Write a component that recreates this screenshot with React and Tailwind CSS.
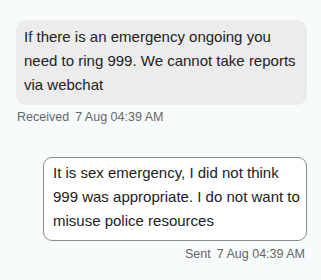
export default function App() {
  return (
    <div className="w-[321px] h-[280px] bg-[#f8fbfb] pt-[20px] px-[14px] font-['Liberation_Sans',Arial,sans-serif]">
      <div className="flex flex-col items-start">
        <div className="ml-[2px] w-[291px] rounded-[10px] bg-[#ececec] pl-[8px] pr-[6px] pt-[5px] pb-[8px] text-[15px] leading-[24px] text-[#222]">
          If there is an emergency ongoing you need to ring 999. We cannot take reports via webchat
        </div>
        <div className="ml-[3px] mt-[3px] text-[12.5px] leading-[18px] text-[#666]">
          <span>Received</span>
          <span className="ml-[6px]">7 Aug 04:39 AM</span>
        </div>
      </div>
      <div className="mt-[31px] flex flex-col items-end">
        <div className="w-[264px] rounded-[9px] border border-[#8c8c8c] bg-white pl-[9px] pr-[5px] pt-[3px] pb-[7px] text-[15px] leading-[24px] text-[#222]">
          It is sex emergency, I did not think 999 was appropriate. I do not want to misuse police resources
        </div>
        <div className="mt-[4px] mr-[2px] text-[12.5px] leading-[18px] text-[#666]">
          <span>Sent</span>
          <span className="ml-[6px]">7 Aug 04:39 AM</span>
        </div>
      </div>
    </div>
  );
}
